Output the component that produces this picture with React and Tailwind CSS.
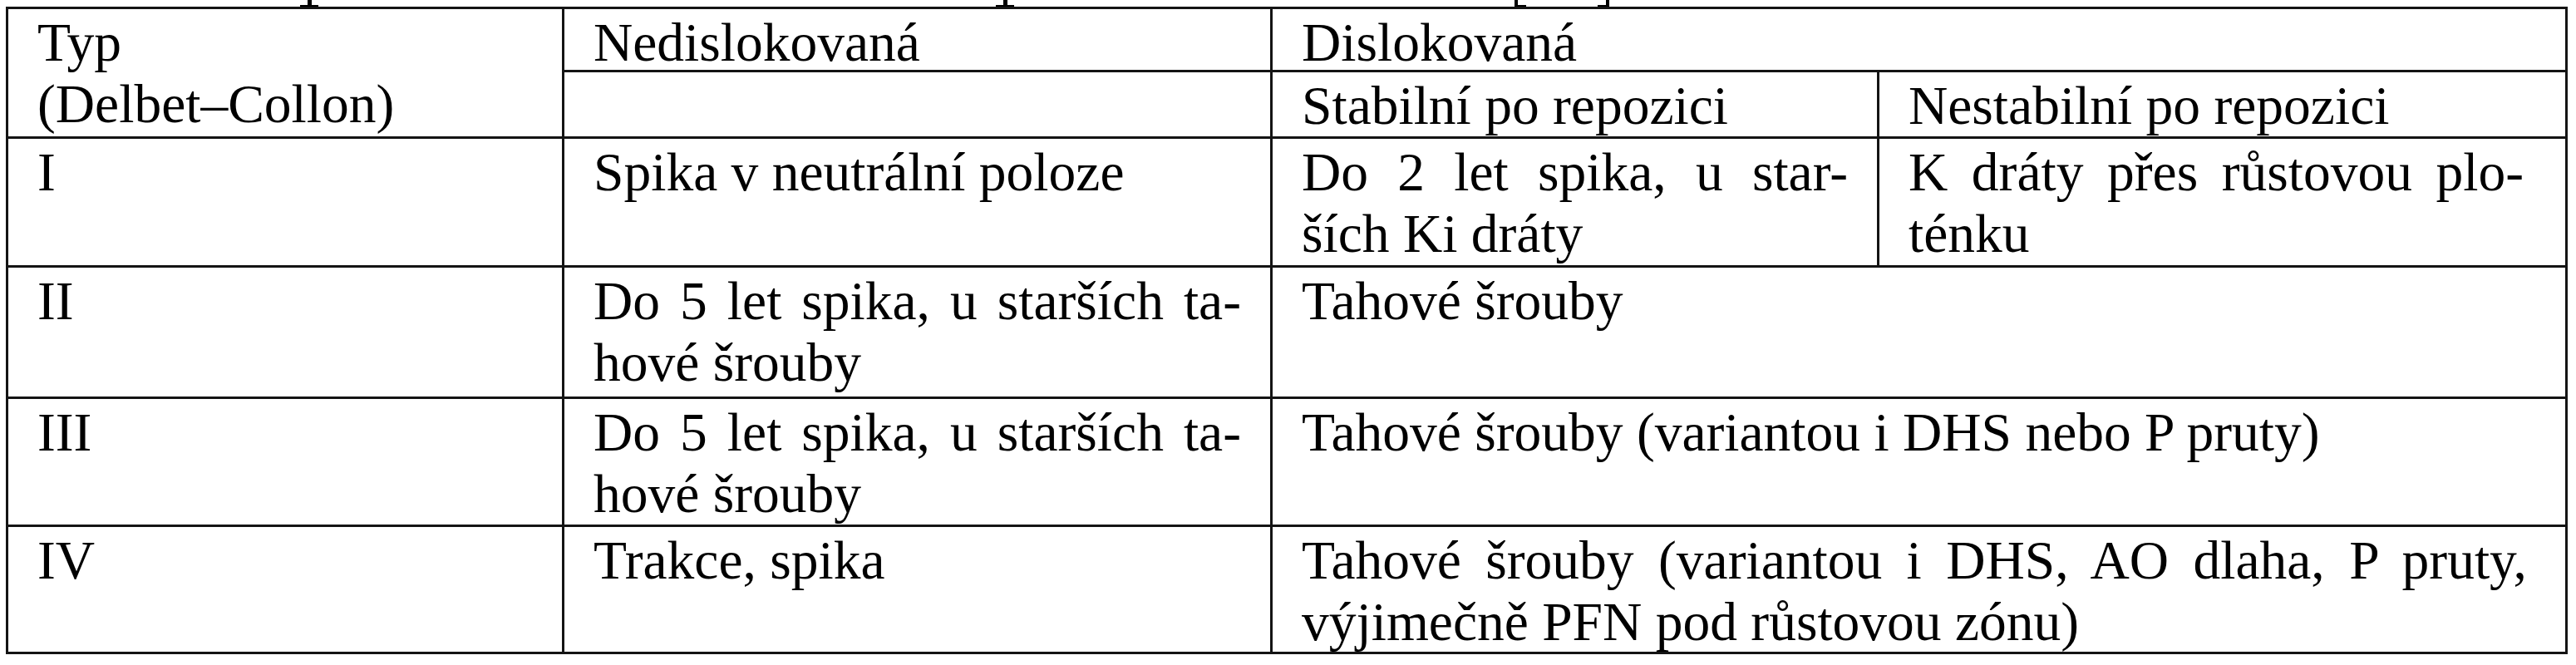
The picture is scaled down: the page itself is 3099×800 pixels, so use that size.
import React from "react";

const J = ({ children }) => (
  <div className="text-justify [text-align-last:justify]">{children}</div>
);

export default function App() {
  const cell = "bg-white pl-[35px] pr-[35px] pt-[3px]";
  return (
    <div
      className="bg-white w-[3099px] h-[800px] overflow-hidden text-black"
      style={{ fontFamily: '"Liberation Serif", "Times New Roman", serif' }}
    >
      {/* cut-off caption descenders */}
      <div className="flex h-[8px] items-end">
        <div className="ml-[361px] flex flex-col items-center">
          <div className="w-[5px] h-[6px] bg-black" />
          <div className="w-[22px] h-[2px] bg-black" />
        </div>
        <div className="ml-[815px] flex flex-col items-center">
          <div className="w-[5px] h-[6px] bg-black" />
          <div className="w-[22px] h-[2px] bg-black" />
        </div>
        <div className="ml-[602px] flex flex-col items-start">
          <div className="w-[4px] h-[6px] bg-black" />
          <div className="w-[14px] h-[2px] bg-black" />
        </div>
        <div className="ml-[86px] flex flex-col items-end">
          <div className="w-[4px] h-[6px] bg-black" />
          <div className="w-[14px] h-[2px] bg-black" />
        </div>
      </div>

      <div className="ml-[7px] inline-grid grid-cols-[666px_849px_727px_825px] grid-rows-[73px_77px_152px_155px_151px_150px] gap-[3px] p-[3px] bg-[#141414] text-[65.5px] leading-[74px]">
        {/* header */}
        <div className={`${cell} row-span-2`}>
          <div>Typ</div>
          <div>(Delbet–Collon)</div>
        </div>
        <div className={cell}>Nedislokovaná</div>
        <div className={`${cell} col-span-2`}>Dislokovaná</div>
        <div className={cell}></div>
        <div className={cell}>Stabilní po repozici</div>
        <div className={cell}>Nestabilní po repozici</div>

        {/* I */}
        <div className={cell}>I</div>
        <div className={cell}>Spika v neutrální poloze</div>
        <div className={cell}>
          <J>Do 2 let spika, u star-</J>
          <div>ších Ki dráty</div>
        </div>
        <div className="bg-white pl-[35px] pr-[50px] pt-[3px]">
          <J>K dráty přes růstovou plo-</J>
          <div>ténku</div>
        </div>

        {/* II */}
        <div className={cell}>II</div>
        <div className={cell}>
          <J>Do 5 let spika, u starších ta-</J>
          <div>hové šrouby</div>
        </div>
        <div className={`${cell} col-span-2`}>Tahové šrouby</div>

        {/* III */}
        <div className={cell}>III</div>
        <div className={cell}>
          <J>Do 5 let spika, u starších ta-</J>
          <div>hové šrouby</div>
        </div>
        <div className={`${cell} col-span-2`}>
          Tahové šrouby (variantou i DHS nebo P pruty)
        </div>

        {/* IV */}
        <div className={cell}>IV</div>
        <div className={cell}>Trakce, spika</div>
        <div className="bg-white pl-[35px] pr-[46px] pt-[3px] col-span-2">
          <J>Tahové šrouby (variantou i DHS, AO dlaha, P pruty,</J>
          <div>výjimečně PFN pod růstovou zónu)</div>
        </div>
      </div>
    </div>
  );
}
